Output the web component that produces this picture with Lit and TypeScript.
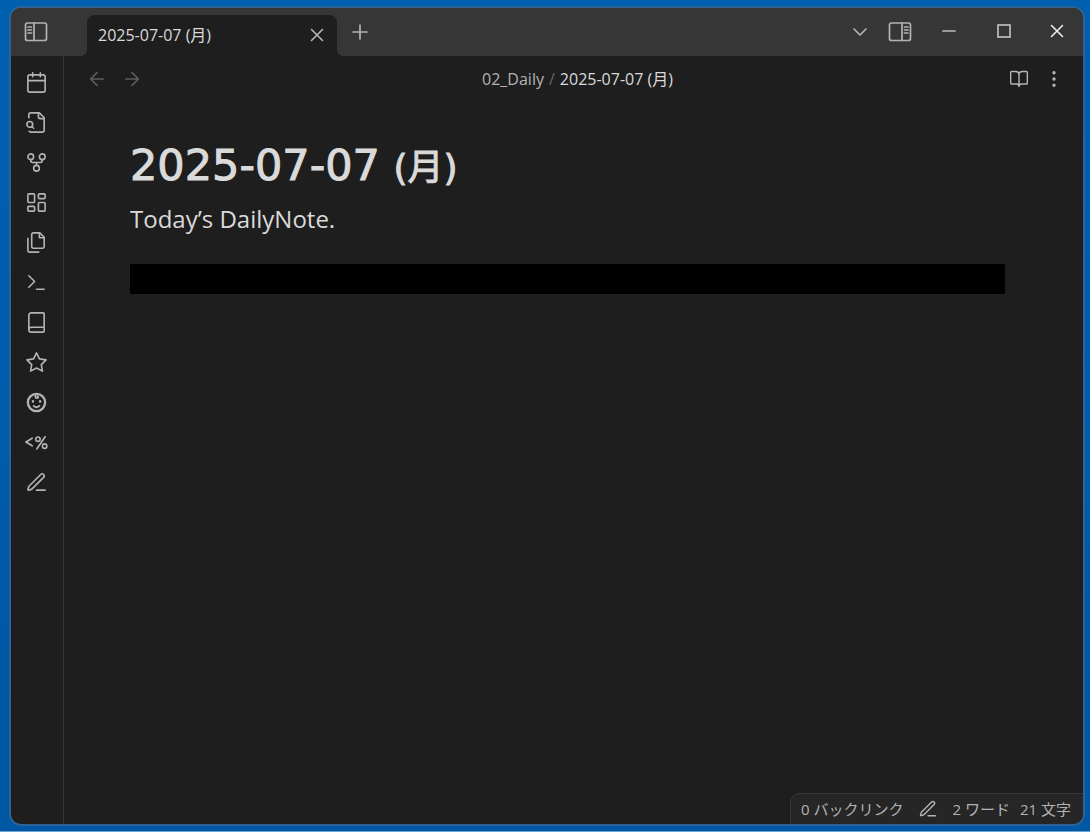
import { LitElement, html, css, svg } from "lit";
import { customElement, property } from "lit/decorators.js";

const icons = {
  sidebarLeft: svg`<rect x="1.5" y="3" width="21" height="17.5" rx="2"/><path d="M10 3v17.5M4 7h3.5M4 10h3.5M4 13h3.5"/>`,
  sidebarRight: svg`<rect x="1.5" y="3" width="21" height="17.5" rx="2"/><path d="M14 3v17.5M16.5 7H20M16.5 10H20M16.5 13H20"/>`,
  close: svg`<path d="M18 6 6 18M6 6l12 12"/>`,
  plus: svg`<path d="M5 12h14M12 5v14"/>`,
  chevron: svg`<path d="m6 9 6 6 6-6"/>`,
  left: svg`<path d="m12 19-7-7 7-7M19 12H5"/>`,
  right: svg`<path d="M5 12h14M12 5l7 7-7 7"/>`,
  minimize: svg`<path d="M6 12h12"/>`,
  maximize: svg`<rect x="6" y="6" width="12" height="12" stroke-linejoin="miter"/>`,
  book: svg`<path d="M12 7v14M3 18a1 1 0 0 1-1-1V4a1 1 0 0 1 1-1h5a4 4 0 0 1 4 4 4 4 0 0 1 4-4h5a1 1 0 0 1 1 1v13a1 1 0 0 1-1 1h-6a3 3 0 0 0-3 3 3 3 0 0 0-3-3z"/>`,
  more: svg`<g fill="currentColor"><circle cx="12" cy="12" r="1.2"/><circle cx="12" cy="4.5" r="1.2"/><circle cx="12" cy="19.5" r="1.2"/></g>`,
  calendar: svg`<rect x="3" y="4" width="18" height="18" rx="2"/><path d="M8 2v4M16 2v4M3 10h18"/>`,
  fileSearch: svg`<path d="M14 2v4a2 2 0 0 0 2 2h4"/><path d="M4.3 21.2A2 2 0 0 0 6 22h12a2 2 0 0 0 2-2V7l-5-5H6a2 2 0 0 0-2 2v3"/><circle cx="5" cy="14" r="3"/><path d="m9 18-1.8-1.8"/>`,
  graph: svg`<circle cx="12" cy="18" r="3"/><circle cx="6" cy="6" r="3"/><circle cx="18" cy="6" r="3"/><path d="M18 9v1a2 2 0 0 1-2 2H8a2 2 0 0 1-2-2V9M12 12v3"/>`,
  canvas: svg`<rect x="3" y="3" width="7" height="9" rx="1"/><rect x="14" y="3" width="7" height="5" rx="1"/><rect x="14" y="12" width="7" height="9" rx="1"/><rect x="3" y="16" width="7" height="5" rx="1"/>`,
  files: svg`<path d="M15.5 2H8.6c-.4 0-.8.2-1.1.5-.3.3-.5.7-.5 1.1v12.8c0 .4.2.8.5 1.1.3.3.7.5 1.1.5h9.8c.4 0 .8-.2 1.1-.5.3-.3.5-.7.5-1.1V6.5L15.5 2z"/><path d="M3 7.6v12.8c0 .4.2.8.5 1.1.3.3.7.5 1.1.5h9.8M15 2v5h5"/>`,
  terminal: svg`<path d="m4 17 6-6-6-6M12 19h8"/>`,
  notebook: svg`<path d="M4 19.5v-15A2.5 2.5 0 0 1 6.5 2H19a1 1 0 0 1 1 1v18a1 1 0 0 1-1 1H6.5a2.5 2.5 0 0 1 0-5H20"/>`,
  star: svg`<path d="m12 2 3.09 6.26L22 9.27l-5 4.87 1.18 6.88L12 17.77l-6.18 3.25L7 14.14 2 9.27l6.91-1.01L12 2z"/>`,
  baby: svg`<circle cx="12" cy="12" r="9" stroke-width="2.4"/><path d="M12 3c-2 1.5-1.5 4.5.5 4.5 1.4 0 1.8-1.7.6-2.2M9 15.5c1.8 1.7 4.2 1.7 6 0" stroke-width="1.9"/><path d="M8.3 10.8v.1M15.7 10.8v.1" stroke-width="2.6"/>`,
  templater: svg`<path d="M7.5 7.5 1 11.5 7.5 15.5M21 6 12.5 18.5" stroke-width="1.8"/><circle cx="13.5" cy="8.5" r="2.3"/><circle cx="20.5" cy="15.8" r="2.3"/>`,
  pen: svg`<path d="M12 20h9M16.376 3.622a1 1 0 0 1 3.002 3.002L7.368 18.635a2 2 0 0 1-.855.506l-2.872.838a.5.5 0 0 1-.62-.62l.838-2.872a2 2 0 0 1 .506-.854z"/>`,
};
type IconName = keyof typeof icons;

@customElement("line-icon")
class LineIcon extends LitElement {
  @property() name: IconName = "close";
  static styles = css`
    :host { display: block; width: 24px; height: 24px; flex: none; }
    .glyph {
      display: block; width: 100%; height: 100%; overflow: visible;
      fill: none; stroke: currentColor; stroke-width: 1.7;
      stroke-linecap: round; stroke-linejoin: round;
    }
  `;
  render() {
    return html`<svg class="glyph" viewBox="0 0 24 24" aria-hidden="true">${icons[this.name]}</svg>`;
  }
}

const ribbon: [IconName, string][] = [
  ["calendar", "Open today's daily note"],
  ["fileSearch", "Open quick switcher"],
  ["graph", "Open graph view"],
  ["canvas", "Create new canvas"],
  ["files", "Insert template"],
  ["terminal", "Open command palette"],
  ["notebook", "Notebook"],
  ["star", "Starred"],
  ["baby", "Memos"],
  ["templater", "Templater"],
  ["pen", "Edit"],
];

@customElement("app-root")
class AppRoot extends LitElement {
  static styles = css`
    :host {
      display: block; box-sizing: border-box; height: 100vh;
      padding: 6px 5px 5px 9px;
      background: linear-gradient(#0060b0, #0057a3);
      border-bottom: 1px solid #6ba3d6;
      font: 16px/24px "Open Sans", "Noto Sans CJK JP", sans-serif;
      color: #dadada;
    }
    button {
      display: flex; align-items: center; justify-content: center;
      padding: 0; border: 0; background: none; color: inherit; font: inherit;
    }
    .window {
      box-sizing: border-box; height: 100%; display: flex; flex-direction: column;
      border: 2px solid #2d6396; border-radius: 12px; overflow: hidden; background: #1e1e1e;
    }
    .titlebar { display: flex; height: 48px; flex: none; background: #363636; color: #b3b3b3; }
    .toggle { width: 50px; height: 47px; }
    .tab {
      position: relative; display: flex; align-items: center; box-sizing: border-box;
      width: 250px; height: 41px; margin: 7px 0 0 26px; padding: 0 8px 2px 11px;
      border-radius: 8px 8px 0 0; background: #1e1e1e; color: #dadada;
    }
    .tab::before, .tab::after {
      content: ""; position: absolute; bottom: 0; width: 6px; height: 6px;
    }
    .tab::before { right: 100%; background: radial-gradient(circle at 0 0, transparent 6px, #1e1e1e 6px); }
    .tab::after { left: 100%; background: radial-gradient(circle at 100% 0, transparent 6px, #1e1e1e 6px); }
    .tab-name { flex: 1; }
    .tab line-icon { width: 22px; height: 22px; }
    .tab button { width: 24px; color: #b8b8b8; }
    .new-tab { width: 46px; height: 48px; }
    .drag { flex: 1; }
    .tab-list { width: 38px; height: 48px; }
    .panel { width: 42px; height: 47px; }
    .control { width: 55px; height: 46px; color: #bdbdbd; }
    .control.last { width: 52px; color: #f0f0f0; }
    .control.last line-icon { width: 22px; height: 22px; }
    .body { flex: 1; display: flex; min-height: 0; }
    .ribbon {
      display: flex; flex-direction: column; box-sizing: border-box; width: 53px; flex: none;
      padding: 6px 2px 0 0; border-right: 1px solid #363636; color: #b3b3b3;
    }
    .ribbon button { height: 40px; }
    .ribbon line-icon { width: 23px; height: 23px; }
    .pane { flex: 1; min-width: 0; display: flex; flex-direction: column; }
    .view-header { display: flex; align-items: center; height: 46px; padding: 0 12px 0 20px; color: #b3b3b3; }
    .nav { display: flex; width: 70px; color: #5c5c5c; }
    .nav button { width: 26px; height: 26px; flex: none; margin-right: 9px; }
    .nav line-icon { width: 22px; height: 22px; }
    .crumbs { flex: 1; display: flex; justify-content: center; gap: 5px; }
    .crumbs a { color: #b3b3b3; text-decoration: none; }
    .slash { color: #666; }
    .here { color: #dadada; }
    .actions { display: flex; width: 70px; }
    .actions button { width: 35px; height: 30px; }
    .actions line-icon { width: 20px; height: 20px; }
    .note { flex: 1; padding: 30px 78px 0 66px; }
    h1 {
      margin: 0; font: 400 43px/66px "DejaVu Sans", "Noto Sans CJK JP", sans-serif;
      -webkit-text-stroke: 1px currentColor;
    }
    .weekday { font-size: 36px; line-height: 1; }
    p { margin: 0; font: 24px/42px "Open Sans", "Noto Sans CJK JP", sans-serif; }
    .block { height: 30px; margin-top: 24px; background: #000; }
    .status {
      align-self: flex-end; display: flex; align-items: center; box-sizing: border-box;
      height: 31px; padding: 0 12px 0 10px; font-size: 15px; color: #b3b3b3; background: #262626;
      border: 1px solid #363636; border-width: 1px 0 0 1px; border-radius: 10px 0 0 0;
    }
    .status button { width: 49px; }
    .status line-icon { width: 20px; height: 20px; }
    .chars { margin-left: 10px; }
  `;

  render() {
    return html`
      <div class="window">
        <header class="titlebar">
          <button class="toggle" aria-label="Toggle left sidebar"><line-icon name="sidebarLeft"></line-icon></button>
          <div class="tab">
            <span class="tab-name">2025-07-07 (月)</span>
            <button aria-label="Close tab"><line-icon name="close"></line-icon></button>
          </div>
          <button class="new-tab" aria-label="New tab"><line-icon name="plus"></line-icon></button>
          <div class="drag"></div>
          <button class="tab-list" aria-label="Tab list"><line-icon name="chevron"></line-icon></button>
          <button class="panel" aria-label="Toggle right sidebar"><line-icon name="sidebarRight"></line-icon></button>
          <button class="control" aria-label="Minimize"><line-icon name="minimize"></line-icon></button>
          <button class="control" aria-label="Maximize"><line-icon name="maximize"></line-icon></button>
          <button class="control last" aria-label="Close"><line-icon name="close"></line-icon></button>
        </header>
        <div class="body">
          <nav class="ribbon">
            ${ribbon.map(([name, label]) => html`<button aria-label=${label}><line-icon name=${name}></line-icon></button>`)}
          </nav>
          <main class="pane">
            <div class="view-header">
              <div class="nav">
                <button aria-label="Back" disabled><line-icon name="left"></line-icon></button>
                <button aria-label="Forward" disabled><line-icon name="right"></line-icon></button>
              </div>
              <div class="crumbs">
                <a href="#">02_Daily</a><span class="slash">/</span><span class="here">2025-07-07 (月)</span>
              </div>
              <div class="actions">
                <button aria-label="Reading view"><line-icon name="book"></line-icon></button>
                <button aria-label="More options"><line-icon name="more"></line-icon></button>
              </div>
            </div>
            <article class="note">
              <h1>2025-07-07 <span class="weekday">(月)</span></h1>
              <p>Today’s DailyNote.</p>
              <div class="block"></div>
            </article>
            <footer class="status">
              <span>0 バックリンク</span>
              <button aria-label="Editing mode"><line-icon name="pen"></line-icon></button>
              <span>2 ワード</span>
              <span class="chars">21 文字</span>
            </footer>
          </main>
        </div>
      </div>
    `;
  }
}
